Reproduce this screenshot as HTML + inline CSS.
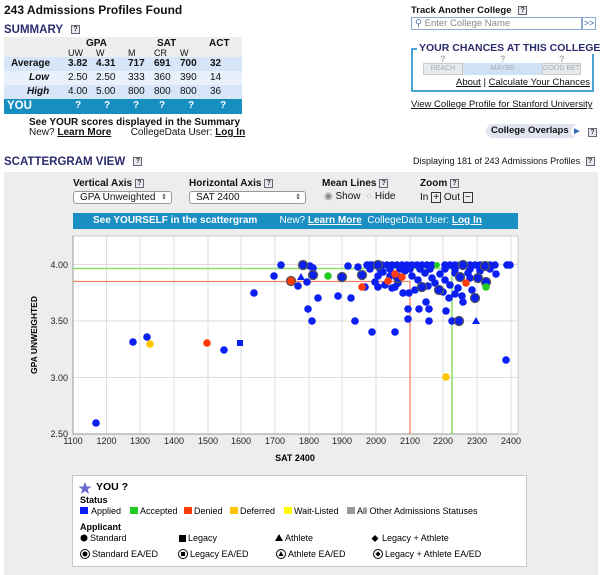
<!DOCTYPE html>
<html><head><meta charset="utf-8"><style>
*{margin:0;padding:0;box-sizing:border-box}
body{width:602px;height:575px;position:relative;background:#fff;font-family:"Liberation Sans",sans-serif;color:#111;overflow:hidden;font-size:10px}
.a{position:absolute;white-space:nowrap}
.q{display:inline-block;width:9px;height:9px;border:1px solid #667;background:#e8e8ee;font-size:7px;line-height:7px;text-align:center;color:#333;font-weight:bold;vertical-align:middle}
.nav{color:#2b2d6e;font-weight:bold}
u{text-decoration:underline}
.sel{position:absolute;height:13px;border:1px solid #999;border-radius:3px;background:#fff;font-size:10px;padding-left:6px;line-height:11px}
.n{position:absolute;font-size:10px}
</style></head><body>
<div class="a" style="left:4px;top:3px;font-size:12px;font-weight:bold">243 Admissions Profiles Found</div>
<div class="a nav" style="left:4px;top:24px;font-size:11.5px">SUMMARY <span class="q" style="margin-left:5px">?</span></div>
<div class="a" style="left:4px;top:37px;width:238px;height:77px">
<div style="position:absolute;left:0;top:0;width:238px;height:20px;background:#eeeeee"></div>
<div style="position:absolute;left:0;top:20px;width:238px;height:14px;background:#d6e5f8"></div>
<div style="position:absolute;left:0;top:34px;width:238px;height:14px;background:#e8f0fb"></div>
<div style="position:absolute;left:0;top:48px;width:238px;height:14px;background:#d6e5f8"></div>
<div style="position:absolute;left:0;top:62px;width:238px;height:15px;background:#168fc0"></div>
</div>
<div class="a" style="left:86px;top:38px;font-weight:bold">GPA</div>
<div class="a" style="left:157px;top:38px;font-weight:bold">SAT</div>
<div class="a" style="left:209px;top:38px;font-weight:bold">ACT</div>
<div class="a" style="left:68px;top:48px;font-size:9px">UW</div><div class="a" style="left:96px;top:48px;font-size:9px">W</div><div class="a" style="left:128px;top:48px;font-size:9px">M</div><div class="a" style="left:154px;top:48px;font-size:9px">CR</div><div class="a" style="left:180px;top:48px;font-size:9px">W</div>
<div class="a" style="left:11px;top:58px;font-weight:bold">Average</div>
<div class="a" style="left:29px;top:72px;font-weight:bold;font-style:italic">Low</div>
<div class="a" style="left:27px;top:86px;font-weight:bold;font-style:italic">High</div>
<div style="font-weight:bold"><span class="n" style="left:68px;top:58px">3.82</span><span class="n" style="left:96px;top:58px">4.31</span><span class="n" style="left:128px;top:58px">717</span><span class="n" style="left:154px;top:58px">691</span><span class="n" style="left:180px;top:58px">700</span><span class="n" style="left:210px;top:58px">32</span></div>
<div><span class="n" style="left:68px;top:72px">2.50</span><span class="n" style="left:96px;top:72px">2.50</span><span class="n" style="left:128px;top:72px">333</span><span class="n" style="left:154px;top:72px">360</span><span class="n" style="left:180px;top:72px">390</span><span class="n" style="left:210px;top:72px">14</span></div>
<div><span class="n" style="left:68px;top:86px">4.00</span><span class="n" style="left:96px;top:86px">5.00</span><span class="n" style="left:128px;top:86px">800</span><span class="n" style="left:154px;top:86px">800</span><span class="n" style="left:180px;top:86px">800</span><span class="n" style="left:210px;top:86px">36</span></div>
<div class="a" style="left:7px;top:100px;color:#fff;font-weight:bold;font-size:11.5px">YOU</div>
<div style="color:#fff;font-weight:bold;font-size:11px"><span class="n" style="left:75px;top:100px">?</span><span class="n" style="left:104px;top:100px">?</span><span class="n" style="left:133px;top:100px">?</span><span class="n" style="left:159px;top:100px">?</span><span class="n" style="left:188px;top:100px">?</span><span class="n" style="left:220px;top:100px">?</span></div>
<div class="a" style="left:29px;top:117px;font-weight:bold;font-size:10px">See YOUR scores displayed in the Summary</div>
<div class="a" style="left:29px;top:127px;font-size:10px">New? <b><u>Learn More</u></b> &nbsp;&nbsp;&nbsp;&nbsp;&nbsp;&nbsp;CollegeData User: <b><u>Log In</u></b></div>

<div class="a" style="left:411px;top:5px;font-weight:bold;font-size:9.5px">Track Another College <span class="q" style="margin-left:4px">?</span></div>
<div class="a" style="left:411px;top:17px;width:171px;height:13px;border:1px solid #8aaad0;font-size:9.5px;color:#888;padding-left:3px;line-height:11px"><span style="color:#5577aa">&#9906;</span> Enter College Name</div>
<div class="a" style="left:582px;top:17px;width:14px;height:13px;border:1px solid #8aaad0;font-size:9px;color:#3366aa;line-height:11px;text-align:center">&gt;&gt;</div>
<div class="a" style="left:411px;top:48px;width:183px;height:44px;border:2px solid #4aa4d4"></div>
<div class="a nav" style="left:417px;top:42px;background:#fff;padding:0 2px;font-size:10.5px">YOUR CHANCES AT THIS COLLEGE</div>
<div class="a" style="left:423px;top:63px;width:40px;height:12px;background:#e6e9ee;border:1px solid #ccc;font-size:7px;color:#aaa;text-align:center;line-height:10px">REACH</div>
<div class="a" style="left:463px;top:63px;width:79px;height:12px;background:#cfe2f4;font-size:7px;color:#aaa;text-align:center;line-height:12px">MAYBE</div>
<div class="a" style="left:542px;top:63px;width:39px;height:12px;background:#e6e9ee;border:1px solid #ccc;font-size:7px;color:#aaa;text-align:center;line-height:10px">GOOD BET</div>
<div class="a" style="left:440px;top:54px;color:#aaa;font-weight:bold;font-size:9px">?</div><div class="a" style="left:500px;top:54px;color:#aaa;font-weight:bold;font-size:9px">?</div><div class="a" style="left:559px;top:54px;color:#aaa;font-weight:bold;font-size:9px">?</div>
<div class="a" style="left:456px;top:77px;font-size:9.5px"><u>About</u> | <u>Calculate Your Chances</u></div>
<div class="a" style="left:411px;top:99px;font-size:9.5px"><u>View College Profile for Stanford University</u></div>
<div class="a" style="left:486px;top:124px;width:93px;height:14px;border-radius:7px;background:#dfe4ee;font-weight:bold;font-size:9.5px;line-height:14px;padding-left:5px">College Overlaps <span style="display:inline-block;width:11px;height:11px;border-radius:6px;background:#fff;color:#3366bb;font-size:7px;line-height:11px;text-align:center">&#9654;</span></div>
<div class="a" style="left:588px;top:127px"><span class="q">?</span></div>
<div class="a" style="left:413px;top:156px;font-size:9px">Displaying 181 of 243 Admissions Profiles <span class="q" style="margin-left:3px">?</span></div>
<div class="a nav" style="left:4px;top:156px;font-size:11.5px">SCATTERGRAM VIEW <span class="q" style="margin-left:5px">?</span></div>

<div class="a" style="left:4px;top:172px;width:594px;height:403px;background:#ededed"></div>
<div class="a" style="left:73px;top:178px;font-weight:bold">Vertical Axis <span class="q">?</span></div>
<div class="a" style="left:189px;top:178px;font-weight:bold">Horizontal Axis <span class="q">?</span></div>
<div class="a" style="left:322px;top:178px;font-weight:bold">Mean Lines <span class="q">?</span></div>
<div class="a" style="left:420px;top:178px;font-weight:bold">Zoom <span class="q">?</span></div>
<div class="sel" style="left:73px;top:191px;width:99px">GPA Unweighted<span style="position:absolute;right:4px;font-size:7px">&#8661;</span></div>
<div class="sel" style="left:189px;top:191px;width:117px">SAT 2400<span style="position:absolute;right:4px;font-size:7px">&#8661;</span></div>
<div class="a" style="left:324px;top:191px;font-size:10px"><span style="color:#888">&#9673;</span> Show &nbsp;<span style="color:#bbb">&#9675;</span> Hide</div>
<div class="a" style="left:420px;top:192px;font-size:10px">In <span style="display:inline-block;width:10px;height:11px;border:1px solid #333;text-align:center;line-height:9px">+</span> Out <span style="display:inline-block;width:10px;height:11px;border:1px solid #333;text-align:center;line-height:9px">&minus;</span></div>
<div class="a" style="left:73px;top:213px;width:445px;height:16px;background:#1a8fc2;color:#fff;font-size:10px;line-height:16px;padding-left:20px"><b>See YOURSELF in the scattergram</b> &nbsp;&nbsp;&nbsp;&nbsp;&nbsp;&nbsp;&nbsp;New? <b><u>Learn More</u></b> &nbsp;CollegeData User: <b><u>Log In</u></b></div>
<div class="a" style="left:72px;top:475px;width:455px;height:92px;background:#fff;border:1px solid #c8c8c8"></div>

<svg class="a" style="left:0;top:0" width="602" height="575" viewBox="0 0 602 575" font-family="Liberation Sans, sans-serif">
<rect x="73" y="236" width="445" height="198" fill="#fff" stroke="#ccc"/>
<g stroke="#ddd" stroke-width="1">
<path d="M106.5 236V434M140 236V434M174 236V434M208 236V434M241 236V434M275 236V434M309 236V434M342 236V434M376 236V434M410 236V434M443 236V434M477 236V434M511 236V434M73 264.5H518M73 321H518M73 377.5H518"/>
</g>
<path d="M73 236V434H518" stroke="#999" fill="none"/>
<path d="M73 268.5H452V434" stroke="#8edc6a" stroke-width="1.5" fill="none"/>
<path d="M73 281.5H410V434" stroke="#f08060" stroke-width="1.3" fill="none"/>
<g font-size="9" fill="#222" text-anchor="end"><text x="68" y="268">4.00</text><text x="68" y="324">3.50</text><text x="68" y="381">3.00</text><text x="68" y="437">2.50</text></g>
<g font-size="9" fill="#222" text-anchor="middle"><text x="73" y="444">1100</text><text x="106.5" y="444">1200</text><text x="140" y="444">1300</text><text x="174" y="444">1400</text><text x="208" y="444">1500</text><text x="241" y="444">1600</text><text x="275" y="444">1700</text><text x="309" y="444">1800</text><text x="342" y="444">1900</text><text x="376" y="444">2000</text><text x="410" y="444">2100</text><text x="443" y="444">2200</text><text x="477" y="444">2300</text><text x="511" y="444">2400</text></g>
<text x="295" y="461" font-size="9" font-weight="bold" text-anchor="middle">SAT 2400</text>
<text transform="translate(37,335) rotate(-90)" font-size="8.5" font-weight="bold" text-anchor="middle">GPA UNWEIGHTED</text>
<g fill="#0a1ff0">
<circle cx="96" cy="423" r="3.8"/><circle cx="133" cy="342" r="3.8"/><circle cx="147" cy="337" r="3.8"/><circle cx="224" cy="350" r="3.8"/><circle cx="254" cy="293" r="3.8"/><rect x="237" y="340" width="6" height="6"/>
<circle cx="281" cy="265" r="3.8"/><circle cx="310" cy="266" r="3.8"/><circle cx="313" cy="268" r="3.8"/><circle cx="274" cy="276" r="3.8"/><circle cx="307" cy="282" r="3.8"/><circle cx="298" cy="286" r="3.8"/><circle cx="348" cy="266" r="3.8"/><circle cx="358" cy="267" r="3.8"/><circle cx="370" cy="265" r="3.8"/><circle cx="378" cy="276" r="3.8"/><circle cx="365" cy="287" r="3.8"/><circle cx="375" cy="282" r="3.8"/><circle cx="318" cy="298" r="3.8"/><circle cx="338" cy="296" r="3.8"/><circle cx="351" cy="298" r="3.8"/><circle cx="308" cy="309" r="3.8"/><circle cx="312" cy="321" r="3.8"/><circle cx="355" cy="321" r="3.8"/><circle cx="372" cy="332" r="3.8"/><circle cx="395" cy="332" r="3.8"/><circle cx="408" cy="309" r="3.8"/><circle cx="408" cy="319" r="3.8"/><circle cx="419" cy="309" r="3.8"/><circle cx="429" cy="309" r="3.8"/><circle cx="429" cy="321" r="3.8"/><circle cx="426" cy="302" r="3.8"/><circle cx="446" cy="311" r="3.8"/><circle cx="452" cy="321" r="3.8"/><circle cx="506" cy="360" r="3.8"/><circle cx="449" cy="298" r="3.8"/><circle cx="463" cy="302" r="3.8"/><circle cx="496" cy="274" r="3.8"/><circle cx="507" cy="265" r="3.8"/><circle cx="510" cy="265" r="3.8"/><circle cx="403" cy="293" r="3.8"/><circle cx="409" cy="293" r="3.8"/><circle cx="395" cy="287" r="3.8"/><circle cx="378" cy="287" r="3.8"/>
<circle cx="367" cy="265" r="3.8"/><circle cx="372" cy="265" r="3.8"/><circle cx="377" cy="265" r="3.8"/><circle cx="382" cy="265" r="3.8"/><circle cx="387" cy="265" r="3.8"/><circle cx="392" cy="265" r="3.8"/><circle cx="397" cy="265" r="3.8"/><circle cx="402" cy="265" r="3.8"/><circle cx="407" cy="265" r="3.8"/><circle cx="412" cy="265" r="3.8"/><circle cx="417" cy="265" r="3.8"/><circle cx="422" cy="265" r="3.8"/><circle cx="427" cy="265" r="3.8"/><circle cx="432" cy="265" r="3.8"/><circle cx="445" cy="265" r="3.8"/><circle cx="450" cy="265" r="3.8"/><circle cx="455" cy="265" r="3.8"/><circle cx="460" cy="265" r="3.8"/><circle cx="465" cy="265" r="3.8"/><circle cx="470" cy="265" r="3.8"/><circle cx="475" cy="265" r="3.8"/><circle cx="480" cy="265" r="3.8"/><circle cx="485" cy="265" r="3.8"/><circle cx="490" cy="265" r="3.8"/><circle cx="495" cy="265" r="3.8"/>
<circle cx="370" cy="269" r="3.8"/><circle cx="380" cy="269" r="3.8"/><circle cx="390" cy="269" r="3.8"/><circle cx="400" cy="269" r="3.8"/><circle cx="410" cy="269" r="3.8"/><circle cx="420" cy="269" r="3.8"/><circle cx="430" cy="269" r="3.8"/><circle cx="445" cy="269" r="3.8"/><circle cx="455" cy="269" r="3.8"/><circle cx="470" cy="269" r="3.8"/><circle cx="480" cy="269" r="3.8"/><circle cx="490" cy="269" r="3.8"/>
<circle cx="383" cy="272" r="3.8"/><circle cx="390" cy="276" r="3.8"/><circle cx="405" cy="271" r="3.8"/><circle cx="412" cy="276" r="3.8"/><circle cx="418" cy="280" r="3.8"/><circle cx="425" cy="273" r="3.8"/><circle cx="432" cy="278" r="3.8"/><circle cx="440" cy="274" r="3.8"/><circle cx="445" cy="280" r="3.8"/><circle cx="450" cy="285" r="3.8"/><circle cx="455" cy="273" r="3.8"/><circle cx="458" cy="288" r="3.8"/><circle cx="468" cy="273" r="3.8"/><circle cx="472" cy="290" r="3.8"/><circle cx="480" cy="271" r="3.8"/><circle cx="415" cy="290" r="3.8"/><circle cx="428" cy="286" r="3.8"/><circle cx="435" cy="283" r="3.8"/><circle cx="385" cy="285" r="3.8"/><circle cx="392" cy="288" r="3.8"/><circle cx="398" cy="283" r="3.8"/><circle cx="443" cy="292" r="3.8"/><circle cx="462" cy="296" r="3.8"/><circle cx="455" cy="294" r="3.8"/><circle cx="470" cy="278" r="3.8"/>
<path d="M301 273l4 7h-8zM476 317l4 7h-8z"/>
</g>
<g fill="#0a1ff0" stroke="#555" stroke-width="1.3">
<circle cx="303" cy="265" r="4.5"/><circle cx="313" cy="275" r="4.5"/><circle cx="342" cy="277" r="4.5"/><circle cx="362" cy="275" r="4.5"/><circle cx="378" cy="265" r="4.5"/><circle cx="398" cy="278" r="4.5"/><circle cx="459" cy="321" r="4.5"/><circle cx="475" cy="298" r="4.5"/><circle cx="486" cy="282" r="4.5"/><circle cx="478" cy="278" r="4.5"/><circle cx="439" cy="290" r="4.5"/><circle cx="422" cy="287" r="4.5"/><circle cx="460" cy="277" r="4.5"/><circle cx="463" cy="265" r="4.5"/><circle cx="485" cy="266" r="4.5"/>
</g>
<g fill="#ff3b0a"><circle cx="207" cy="343" r="3.8"/><circle cx="362" cy="287" r="3.8"/><circle cx="388" cy="281" r="3.8"/><circle cx="395" cy="274" r="3.8"/><circle cx="402" cy="277" r="3.8"/><circle cx="466" cy="283" r="3.8"/></g>
<circle cx="291" cy="281" r="4.5" fill="#ff3b0a" stroke="#555" stroke-width="1.3"/>
<g fill="#22cc22"><circle cx="328" cy="276" r="3.8"/><circle cx="486" cy="287" r="3.8"/><circle cx="437" cy="265" r="3"/></g>
<g fill="#ffc400"><circle cx="150" cy="344" r="3.8"/><circle cx="446" cy="377" r="3.8"/></g>
<path d="M85 482l1.8 4.5h4.7l-3.8 2.9 1.4 4.6-4.1-2.8-4.1 2.8 1.4-4.6-3.8-2.9h4.7z" fill="#6a6ad0"/>
<text x="96" y="490" font-size="10.5" font-weight="bold">YOU ?</text>
<g font-size="9">
<text x="80" y="503" font-weight="bold">Status</text>
<rect x="80" y="507" width="8" height="7" fill="#0a1ff0"/><text x="91" y="514">Applied</text>
<rect x="130" y="507" width="8" height="7" fill="#22cc22"/><text x="140" y="514">Accepted</text>
<rect x="184" y="507" width="8" height="7" fill="#ff3b0a"/><text x="194" y="514">Denied</text>
<rect x="230" y="507" width="8" height="7" fill="#ffc400"/><text x="240" y="514">Deferred</text>
<rect x="284" y="507" width="8" height="7" fill="#ffff00"/><text x="294" y="514">Wait-Listed</text>
<rect x="347" y="507" width="8" height="7" fill="#999"/><text x="357" y="514">All Other Admissions Statuses</text>
<text x="80" y="530" font-weight="bold">Applicant</text>
<circle cx="84" cy="538" r="3.5"/><text x="90" y="541">Standard</text>
<rect x="179" y="535" width="7" height="7"/><text x="188" y="541">Legacy</text>
<path d="M279 534l4 7h-8z"/><text x="285" y="541">Athlete</text>
<path d="M375 535l3.5 3.5-3.5 3.5-3.5-3.5z"/><text x="382" y="541">Legacy + Athlete</text>
<circle cx="85" cy="554" r="4.5" fill="none" stroke="#000"/><circle cx="85" cy="554" r="2.5"/><text x="92" y="557">Standard EA/ED</text>
<circle cx="183" cy="554" r="4.5" fill="none" stroke="#000"/><rect x="181" y="552" width="4" height="4"/><text x="190" y="557">Legacy EA/ED</text>
<circle cx="281" cy="554" r="4.5" fill="none" stroke="#000"/><path d="M281 551l2.5 5h-5z"/><text x="288" y="557">Athlete EA/ED</text>
<circle cx="378" cy="554" r="4.5" fill="none" stroke="#000"/><path d="M378 551.5l2.5 2.5-2.5 2.5-2.5-2.5z"/><text x="385" y="557">Legacy + Athlete EA/ED</text>
</g>
</svg>
</body></html>
